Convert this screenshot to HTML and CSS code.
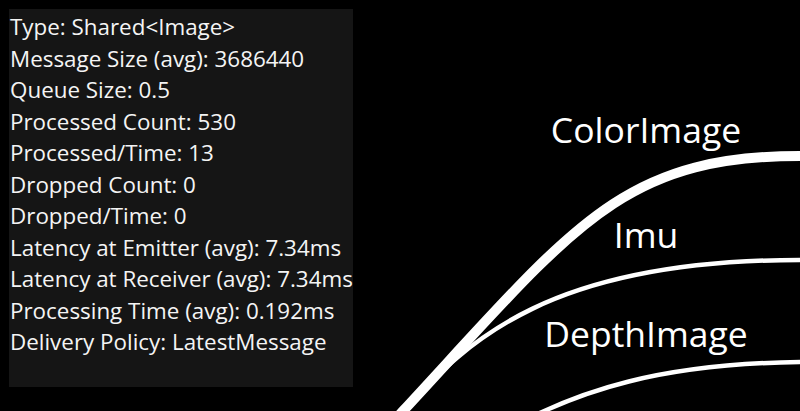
FILE: index.html
```html
<!DOCTYPE html>
<html>
<head>
<meta charset="utf-8">
<link rel="stylesheet" href="styles.css">
</head>
<body>
<div class="stage">
  <svg class="graph" viewBox="0 0 800 411" width="800" height="411">
    <path class="edge edge-thick" d="M 380 436 L 403 411 C 573 227.4, 620 156, 800 156 L 830 156"/>
    <path class="edge edge-thin" d="M 380 436 L 403 411 C 468 340, 550 260, 800 260 L 830 260"/>
    <path class="edge edge-thin" d="M 510 428 C 580 390, 660 364, 800 362 L 830 362"/>
    <text class="label" x="646" y="143">ColorImage</text>
    <text class="label" x="646" y="248">Imu</text>
    <text class="label" x="646" y="347">DepthImage</text>
  </svg>
  <div class="tooltip">
    <div class="line">Type: Shared&lt;Image&gt;</div>
    <div class="line">Message Size (avg): 3686440</div>
    <div class="line">Queue Size: 0.5</div>
    <div class="line">Processed Count: 530</div>
    <div class="line">Processed/Time: 13</div>
    <div class="line">Dropped Count: 0</div>
    <div class="line">Dropped/Time: 0</div>
    <div class="line">Latency at Emitter (avg): 7.34ms</div>
    <div class="line">Latency at Receiver (avg): 7.34ms</div>
    <div class="line">Processing Time (avg): 0.192ms</div>
    <div class="line">Delivery Policy: LatestMessage</div>
  </div>
</div>
</body>
</html>
```

FILE: styles.css
```css
html, body {
  margin: 0;
  padding: 0;
  background: #000;
  overflow: hidden;
}
.stage {
  position: relative;
  width: 800px;
  height: 411px;
  background: #000;
  font-family: "Open Sans", "Noto Sans", sans-serif;
}
.graph {
  display: block;
}
.edge {
  fill: none;
  stroke: #fff;
}
.edge-thick {
  stroke-width: 10;
}
.edge-thin {
  stroke-width: 4.5;
}
.label {
  fill: #fff;
  font-family: "Open Sans", "Noto Sans", sans-serif;
  font-size: 35.5px;
  text-anchor: middle;
}
.tooltip {
  position: absolute;
  left: 9px;
  top: 9px;
  width: 344px;
  height: 378px;
  padding: 2px 0 0 1px;
  box-sizing: border-box;
  background: #151515;
  color: #f4f4f4;
  font-size: 22.4px;
  line-height: 31.5px;
  white-space: nowrap;
}
.line {
  height: 31.5px;
}
```
